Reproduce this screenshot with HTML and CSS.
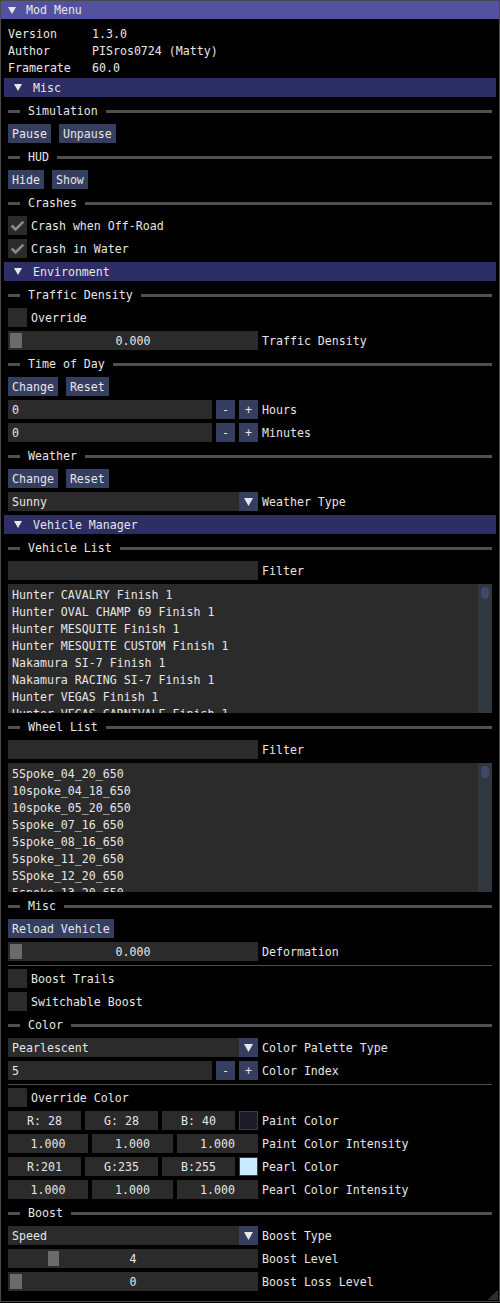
FILE: index.html
```html
<!DOCTYPE html>
<html>
<head>
<meta charset="utf-8">
<link rel="stylesheet" href="styles.css">
</head>
<body>
<div class="win">
  <div class="title"><svg class="arrow" width="8" height="7" viewBox="0 0 8 7"><polygon points="0,0 8,0 4,7" fill="#e6e6e6"/></svg><span>Mod Menu</span></div>
  <div class="content">
    <div class="kv"><span class="k">Version</span><span>1.3.0</span></div>
    <div class="kv"><span class="k">Author</span><span>PISros0724 (Matty)</span></div>
    <div class="kv"><span class="k">Framerate</span><span>60.0</span></div>

    <div class="hdr"><svg class="arrow" width="8" height="7" viewBox="0 0 8 7"><polygon points="0,0 8,0 4,7" fill="#e6e6e6"/></svg><span>Misc</span></div>
    <div class="sep"><i class="l"></i><span>Simulation</span><i class="r"></i></div>
    <div class="row btns"><span class="btn">Pause</span><span class="btn">Unpause</span></div>
    <div class="sep"><i class="l"></i><span>HUD</span><i class="r"></i></div>
    <div class="row btns"><span class="btn">Hide</span><span class="btn">Show</span></div>
    <div class="sep"><i class="l"></i><span>Crashes</span><i class="r"></i></div>
    <div class="row"><span class="check"><svg width="19" height="19" viewBox="0 0 19 19"><path d="M3.65 9.5 L7.55 13.4 L15.35 5.6" fill="none" stroke="#8a8a8a" stroke-width="2.6"/></svg></span><span class="lbl">Crash when Off-Road</span></div>
    <div class="row"><span class="check"><svg width="19" height="19" viewBox="0 0 19 19"><path d="M3.65 9.5 L7.55 13.4 L15.35 5.6" fill="none" stroke="#8a8a8a" stroke-width="2.6"/></svg></span><span class="lbl">Crash in Water</span></div>

    <div class="hdr"><svg class="arrow" width="8" height="7" viewBox="0 0 8 7"><polygon points="0,0 8,0 4,7" fill="#e6e6e6"/></svg><span>Environment</span></div>
    <div class="sep"><i class="l"></i><span>Traffic Density</span><i class="r"></i></div>
    <div class="row"><span class="check"></span><span class="lbl">Override</span></div>
    <div class="row"><span class="frame slider"><i class="grab"></i>0.000</span><span class="lbl">Traffic Density</span></div>
    <div class="sep"><i class="l"></i><span>Time of Day</span><i class="r"></i></div>
    <div class="row btns"><span class="btn">Change</span><span class="btn">Reset</span></div>
    <div class="row"><span class="frame num">0</span><span class="sbtn">-</span><span class="sbtn">+</span><span class="lbl">Hours</span></div>
    <div class="row"><span class="frame num">0</span><span class="sbtn">-</span><span class="sbtn">+</span><span class="lbl">Minutes</span></div>
    <div class="sep"><i class="l"></i><span>Weather</span><i class="r"></i></div>
    <div class="row btns"><span class="btn">Change</span><span class="btn">Reset</span></div>
    <div class="row"><span class="combo"><span class="cv">Sunny</span><span class="ca"><svg width="9" height="8" viewBox="0 0 9 8"><polygon points="0,0 9,0 4.5,8" fill="#e6e6e6"/></svg></span></span><span class="lbl">Weather Type</span></div>

    <div class="hdr"><svg class="arrow" width="8" height="7" viewBox="0 0 8 7"><polygon points="0,0 8,0 4,7" fill="#e6e6e6"/></svg><span>Vehicle Manager</span></div>
    <div class="sep"><i class="l"></i><span>Vehicle List</span><i class="r"></i></div>
    <div class="row"><span class="frame w250"></span><span class="lbl">Filter</span></div>
    <div class="list">
      <div>Hunter CAVALRY Finish 1</div>
      <div>Hunter OVAL CHAMP 69 Finish 1</div>
      <div>Hunter MESQUITE Finish 1</div>
      <div>Hunter MESQUITE CUSTOM Finish 1</div>
      <div>Nakamura SI-7 Finish 1</div>
      <div>Nakamura RACING SI-7 Finish 1</div>
      <div>Hunter VEGAS Finish 1</div>
      <div>Hunter VEGAS CARNIVALE Finish 1</div>
      <span class="sb"><i></i></span>
    </div>
    <div class="sep"><i class="l"></i><span>Wheel List</span><i class="r"></i></div>
    <div class="row"><span class="frame w250"></span><span class="lbl">Filter</span></div>
    <div class="list">
      <div>5Spoke_04_20_650</div>
      <div>10spoke_04_18_650</div>
      <div>10spoke_05_20_650</div>
      <div>5spoke_07_16_650</div>
      <div>5spoke_08_16_650</div>
      <div>5spoke_11_20_650</div>
      <div>5Spoke_12_20_650</div>
      <div>5spoke_13_20_650</div>
      <span class="sb"><i></i></span>
    </div>
    <div class="sep"><i class="l"></i><span>Misc</span><i class="r"></i></div>
    <div class="row btns"><span class="btn">Reload Vehicle</span></div>
    <div class="row"><span class="frame slider"><i class="grab"></i>0.000</span><span class="lbl">Deformation</span></div>
    <div class="hline"></div>
    <div class="row"><span class="check"></span><span class="lbl">Boost Trails</span></div>
    <div class="row"><span class="check"></span><span class="lbl">Switchable Boost</span></div>
    <div class="sep"><i class="l"></i><span>Color</span><i class="r"></i></div>
    <div class="row"><span class="combo"><span class="cv">Pearlescent</span><span class="ca"><svg width="9" height="8" viewBox="0 0 9 8"><polygon points="0,0 9,0 4.5,8" fill="#e6e6e6"/></svg></span></span><span class="lbl">Color Palette Type</span></div>
    <div class="row"><span class="frame num">5</span><span class="sbtn">-</span><span class="sbtn">+</span><span class="lbl">Color Index</span></div>
    <div class="hline"></div>
    <div class="row"><span class="check"></span><span class="lbl">Override Color</span></div>
    <div class="row"><span class="frame cf">R: 28</span><span class="frame cf">G: 28</span><span class="frame cf">B: 40</span><span class="swatch paint"></span><span class="lbl">Paint Color</span></div>
    <div class="row"><span class="frame f80">1.000</span><span class="frame f81">1.000</span><span class="frame f81">1.000</span><span class="lbl">Paint Color Intensity</span></div>
    <div class="row"><span class="frame cf">R:201</span><span class="frame cf">G:235</span><span class="frame cf">B:255</span><span class="swatch pearl"></span><span class="lbl">Pearl Color</span></div>
    <div class="row"><span class="frame f80">1.000</span><span class="frame f81">1.000</span><span class="frame f81">1.000</span><span class="lbl">Pearl Color Intensity</span></div>
    <div class="sep"><i class="l"></i><span>Boost</span><i class="r"></i></div>
    <div class="row"><span class="combo"><span class="cv">Speed</span><span class="ca"><svg width="9" height="8" viewBox="0 0 9 8"><polygon points="0,0 9,0 4.5,8" fill="#e6e6e6"/></svg></span></span><span class="lbl">Boost Type</span></div>
    <div class="row"><span class="frame slider"><i class="grab" style="left:40px;width:11px"></i>4</span><span class="lbl">Boost Level</span></div>
    <div class="row"><span class="frame slider"><i class="grab"></i>0</span><span class="lbl">Boost Loss Level</span></div>
  </div>
  <i class="grip"></i>
</div>
</body>
</html>
```
FILE: styles.css
```css
html, body {
  margin: 0;
  padding: 0;
  background: #000;
}
body {
  font-family: "DejaVu Sans Mono", "Liberation Mono", monospace;
  font-size: 11.6px;
  color: #e6e6e6;
}
.win {
  position: relative;
  width: 500px;
  height: 1302px;
  box-sizing: border-box;
  border: 1px solid #4a4a4a;
  background: #000;
  display: flex;
  flex-direction: column;
}
.title {
  height: 18px;
  background: #5252a1;
  display: flex;
  align-items: flex-start;
  padding-left: 7px;
}
.title .arrow {
  margin-top: 6px;
  margin-right: 10px;
}
.title span {
  line-height: 13px;
  padding-top: 3px;
}
.content {
  padding: 8px 7px;
  display: flex;
  flex-direction: column;
  gap: 4px;
}
.kv {
  display: flex;
  height: 13px;
  box-sizing: border-box;
  padding-top: 1px;
  line-height: 13px;
  white-space: pre;
}
.kv .k {
  width: 84px;
}
.hdr {
  margin: 0 -4px;
  height: 19px;
  background: #2e2e67;
  display: flex;
  align-items: flex-start;
  padding-left: 10px;
}
.hdr .arrow {
  margin-top: 6px;
  margin-right: 11px;
}
.hdr span {
  line-height: 13px;
  padding-top: 4px;
}
.sep {
  height: 19px;
  display: flex;
  align-items: flex-start;
}
.sep i {
  height: 3px;
  margin-top: 9px;
  background: #505050;
}
.sep .l {
  width: 12px;
}
.sep .r {
  flex: 1;
}
.sep span {
  margin: 0 8px;
  line-height: 13px;
  padding-top: 4px;
}
.row {
  display: flex;
  height: 19px;
  gap: 4px;
  align-items: flex-start;
}
.row.btns {
  gap: 8px;
}
.btn {
  height: 19px;
  box-sizing: border-box;
  padding: 4px 4px 0;
  line-height: 13px;
  background: #363e5f;
  white-space: pre;
}
.frame {
  height: 19px;
  box-sizing: border-box;
  padding: 4px 4px 0;
  line-height: 13px;
  background: #2b2b2b;
  white-space: pre;
}
.lbl {
  line-height: 13px;
  padding-top: 4px;
  white-space: pre;
}
.w250 {
  width: 250px;
}
.check {
  width: 19px;
  height: 19px;
  background: #2b2b2b;
  display: block;
}
.check svg {
  display: block;
}
.slider {
  position: relative;
  width: 250px;
  text-align: center;
}
.grab {
  position: absolute;
  top: 2px;
  left: 2px;
  width: 12px;
  height: 15px;
  background: #6b6b6b;
}
.num {
  width: 204px;
}
.sbtn {
  width: 19px;
  height: 19px;
  box-sizing: border-box;
  padding-top: 4px;
  line-height: 13px;
  text-align: center;
  background: #363e5f;
}
.combo {
  display: flex;
  width: 250px;
  height: 19px;
}
.combo .cv {
  flex: 1;
  box-sizing: border-box;
  padding: 4px 4px 0;
  line-height: 13px;
  background: #2b2b2b;
}
.combo .ca {
  width: 19px;
  height: 19px;
  background: #363e5f;
  display: flex;
  align-items: center;
  justify-content: center;
}
.list {
  position: relative;
  height: 129px;
  box-sizing: border-box;
  padding: 4px;
  background: #2b2b2b;
  overflow: hidden;
  display: flex;
  flex-direction: column;
  gap: 4px;
}
.list div {
  flex: none;
  height: 13px;
  box-sizing: border-box;
  padding-top: 1px;
  line-height: 13px;
  white-space: pre;
}
.sb {
  position: absolute;
  top: 0;
  right: 0;
  bottom: 0;
  width: 14px;
  background: #30373f;
}
.sb i {
  position: absolute;
  top: 3px;
  left: 3px;
  width: 8px;
  height: 12px;
  border-radius: 4px;
  background: #41466b;
}
.hline {
  height: 1px;
  margin-bottom: -1px;
  background: #4d4d4d;
}
.cf {
  width: 73px;
  text-align: center;
}
.f80 {
  width: 80px;
  text-align: center;
}
.f81 {
  width: 81px;
  text-align: center;
}
.swatch {
  width: 19px;
  height: 19px;
  box-sizing: border-box;
  border: 1px solid #3c3c48;
}
.paint {
  background: #1c1c28;
}
.pearl {
  background: #c9ebff;
}
.grip {
  position: absolute;
  right: 1px;
  bottom: 1px;
  width: 10px;
  height: 10px;
  background: linear-gradient(to top left, #2c2c2c 50%, transparent 50%);
}
```
